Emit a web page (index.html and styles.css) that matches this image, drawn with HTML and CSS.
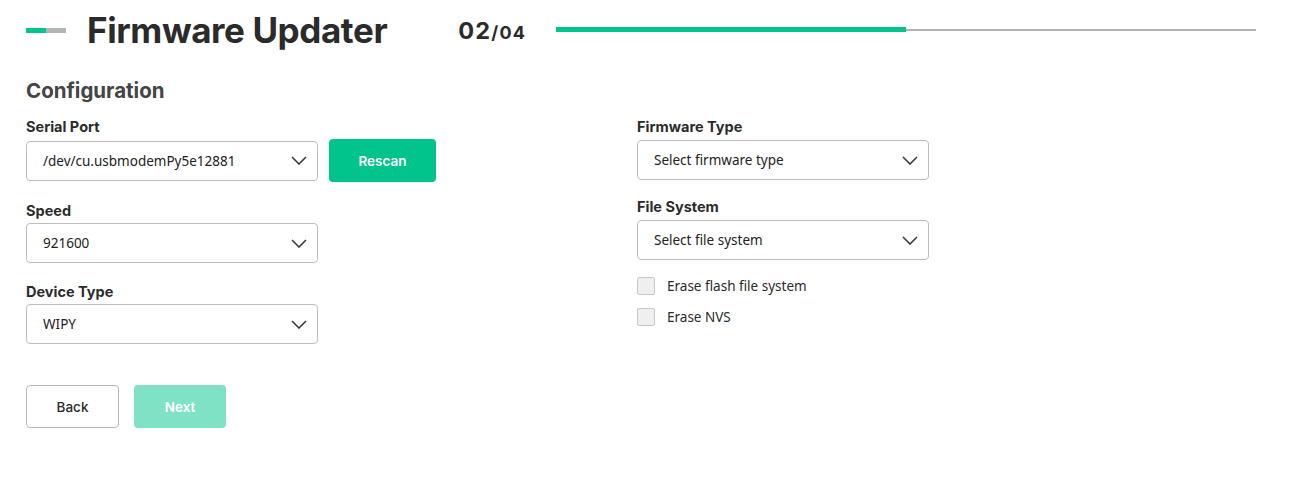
FILE: index.html
```html
<!DOCTYPE html>
<html>
<head>
<meta charset="utf-8">
<link rel="stylesheet" href="styles.css">
</head>
<body>
<div class="page">
  <header class="header">
    <div class="mark"><span class="mark-on"></span><span class="mark-off"></span></div>
    <h1 class="title">Firmware Updater</h1>
    <div class="step"><span class="step-cur">02</span><span class="step-tot">/04</span></div>
    <div class="progress"><div class="progress-fill" style="width:50%"></div></div>
  </header>

  <h2 class="section">Configuration</h2>

  <div class="columns">
    <div class="col">
      <div class="field">
        <label class="label">Serial Port</label>
        <div class="row">
          <div class="select"><span>/dev/cu.usbmodemPy5e12881</span>
            <svg class="chev" viewBox="0 0 16 9" width="16" height="9"><path d="M1 1l7 7 7-7" fill="none" stroke="#3a3a3a" stroke-width="1.6"/></svg>
          </div>
          <button class="btn btn-primary btn-rescan">Rescan</button>
        </div>
      </div>
      <div class="field">
        <label class="label">Speed</label>
        <div class="select"><span>921600</span>
          <svg class="chev" viewBox="0 0 16 9" width="16" height="9"><path d="M1 1l7 7 7-7" fill="none" stroke="#3a3a3a" stroke-width="1.6"/></svg>
        </div>
      </div>
      <div class="field">
        <label class="label">Device Type</label>
        <div class="select"><span>WIPY</span>
          <svg class="chev" viewBox="0 0 16 9" width="16" height="9"><path d="M1 1l7 7 7-7" fill="none" stroke="#3a3a3a" stroke-width="1.6"/></svg>
        </div>
      </div>
    </div>

    <div class="col">
      <div class="field field-r">
        <label class="label">Firmware Type</label>
        <div class="select"><span>Select firmware type</span>
          <svg class="chev" viewBox="0 0 16 9" width="16" height="9"><path d="M1 1l7 7 7-7" fill="none" stroke="#3a3a3a" stroke-width="1.6"/></svg>
        </div>
      </div>
      <div class="field field-r">
        <label class="label">File System</label>
        <div class="select"><span>Select file system</span>
          <svg class="chev" viewBox="0 0 16 9" width="16" height="9"><path d="M1 1l7 7 7-7" fill="none" stroke="#3a3a3a" stroke-width="1.6"/></svg>
        </div>
      </div>
      <div class="checks">
        <label class="check"><span class="box"></span>Erase flash file system</label>
        <label class="check"><span class="box"></span>Erase NVS</label>
      </div>
    </div>
  </div>

  <div class="actions">
    <button class="btn btn-outline">Back</button>
    <button class="btn btn-disabled">Next</button>
  </div>
</div>
</body>
</html>
```

FILE: styles.css
```css
* { box-sizing: border-box; }
html, body { margin: 0; padding: 0; background: #fff; }
body { font-family: "Noto Sans", "Open Sans", sans-serif; color: #2a2a2a; }

.page { padding: 0 43px 0 26px; }

.header { display: flex; align-items: center; height: 60px; }
.mark { display: flex; width: 40px; height: 5px; margin-top: 1px; flex: none; }
.mark-on { width: 20px; background: #00c48c; }
.mark-off { width: 20px; background: #b2b5b5; }
.title {
  margin: 0 0 0 21px;
  font-family: Inter, sans-serif;
  font-weight: 700;
  font-size: 35px;
  letter-spacing: -0.4px;
  color: #2b2b2b;
  line-height: 1;
}
.step { margin-left: 71px; font-family: Inter, sans-serif; font-weight: 700; color: #2b2b2b; display: flex; align-items: baseline; letter-spacing: 1.2px; }
.step-cur { font-size: 23.5px; }
.step-tot { font-size: 18px; }
.progress { flex: none; width: 700px; margin-left: auto; height: 2px; background: #b2b5b5; position: relative; }
.progress-fill { position: absolute; left: 0; top: -2px; height: 5px; background: #00c48c; }

.section {
  margin: 19px 0 0;
  font-family: Inter, sans-serif;
  font-weight: 700;
  font-size: 20.5px;
  line-height: 24px;
  color: #444;
}

.columns { display: grid; grid-template-columns: 611px 292px; margin-top: 14px; }
.col { display: flex; flex-direction: column; }

.field { display: flex; flex-direction: column; margin-bottom: 19px; }
.field-r { margin-bottom: 17px; }
.label {
  font-family: Inter, sans-serif;
  font-weight: 700;
  font-size: 14.5px;
  line-height: 20px;
  color: #2b2b2b;
  margin-bottom: 2px;
}
.row { display: flex; align-items: center; gap: 11px; }

.select {
  width: 292px;
  height: 40px;
  border: 1px solid #bdbdbd;
  border-radius: 4px;
  display: flex;
  align-items: center;
  justify-content: space-between;
  padding: 0 10px 0 16px;
  font-size: 13.5px;
  color: #222;
}
.field-r .select { margin-top: 1px; }
.chev { display: block; }

.btn {
  font-family: Inter, sans-serif;
  font-weight: 600;
  font-size: 13.5px;
  height: 43px;
  border-radius: 4px;
  border: none;
  padding: 0;
  cursor: pointer;
}
.btn-primary { background: #00c48c; color: #fff; }
.btn-rescan { width: 107px; }
.btn-outline { width: 93px; background: #fff; border: 1px solid #b9b9b9; color: #2b2b2b; font-weight: 500; }
.btn-disabled { width: 92px; background: #80e2c5; color: #fff; }

.checks { display: flex; flex-direction: column; gap: 13px; }
.check { display: flex; align-items: center; font-size: 13.5px; color: #2a2a2a; height: 18px; }
.box { width: 18px; height: 18px; border: 1px solid #c9c9c9; background: #efefef; border-radius: 2px; margin-right: 12px; }

.actions { display: flex; gap: 15px; margin-top: 22px; }
```
